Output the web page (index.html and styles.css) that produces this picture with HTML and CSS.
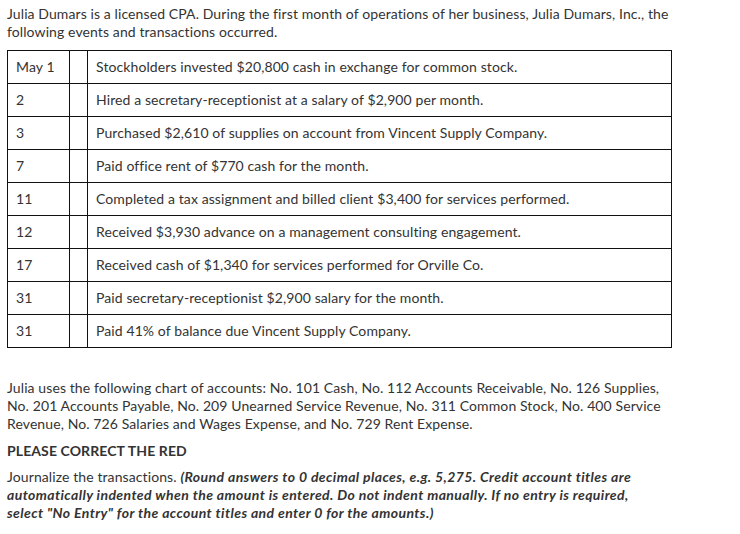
FILE: index.html
```html
<!DOCTYPE html>
<html>
<head>
<meta charset="utf-8">
<link rel="stylesheet" href="styles.css">
</head>
<body>
<div class="page">
  <p class="intro">Julia Dumars is a licensed CPA. During the first month of operations of her business, Julia Dumars, Inc., the following events and transactions occurred.</p>
  <table class="events">
    <tr><td class="date">May 1</td><td class="blank"></td><td class="desc">Stockholders invested $20,800 cash in exchange for common stock.</td></tr>
    <tr><td class="date">2</td><td class="blank"></td><td class="desc">Hired a secretary-receptionist at a salary of $2,900 per month.</td></tr>
    <tr><td class="date">3</td><td class="blank"></td><td class="desc">Purchased $2,610 of supplies on account from Vincent Supply Company.</td></tr>
    <tr><td class="date">7</td><td class="blank"></td><td class="desc">Paid office rent of $770 cash for the month.</td></tr>
    <tr><td class="date">11</td><td class="blank"></td><td class="desc">Completed a tax assignment and billed client $3,400 for services performed.</td></tr>
    <tr><td class="date">12</td><td class="blank"></td><td class="desc">Received $3,930 advance on a management consulting engagement.</td></tr>
    <tr><td class="date">17</td><td class="blank"></td><td class="desc">Received cash of $1,340 for services performed for Orville Co.</td></tr>
    <tr><td class="date">31</td><td class="blank"></td><td class="desc">Paid secretary-receptionist $2,900 salary for the month.</td></tr>
    <tr><td class="date">31</td><td class="blank"></td><td class="desc">Paid 41% of balance due Vincent Supply Company.</td></tr>
  </table>
  <p class="chart">Julia uses the following chart of accounts: No. 101 Cash, No. 112 Accounts Receivable, No. 126 Supplies, No. 201 Accounts Payable, No. 209 Unearned Service Revenue, No. 311 Common Stock, No. 400 Service Revenue, No. 726 Salaries and Wages Expense, and No. 729 Rent Expense.</p>
  <p class="heading">PLEASE CORRECT THE RED</p>
  <p class="instr">Journalize the transactions. <em class="note">(Round answers to 0 decimal places, e.g. 5,275. Credit account titles are automatically indented when the amount is entered. Do not indent manually. If no entry is required, select "No Entry" for the account titles and enter 0 for the amounts.)</em></p>
</div>
</body>
</html>
```

FILE: styles.css
```css
html, body {
  margin: 0;
  padding: 0;
  background: #fff;
}
.page {
  padding: 5px 7px 0 7px;
  font-family: Lato, "Open Sans", sans-serif;
  font-size: 14px;
  line-height: 18px;
  letter-spacing: 0.1px;
  color: #333;
  width: 665px;
}
p {
  margin: 0;
}
.intro {
  margin-bottom: 9px;
}
.chart {
  width: 660px;
}
.instr {
  width: 634px;
}
.events {
  border-collapse: collapse;
  width: 665px;
  margin-bottom: 31px;
}
.events td {
  border: 1px solid #111;
  height: 32px;
  padding: 0 8px;
  vertical-align: middle;
  color: #333;
}
.events td.date {
  width: 45px;
}
.events td.blank {
  width: 1px;
}
.heading {
  font-weight: bold;
  margin: 9px 0 8px;
}
.note {
  font-weight: bold;
  font-style: italic;
  letter-spacing: 0.4px;
}
```
